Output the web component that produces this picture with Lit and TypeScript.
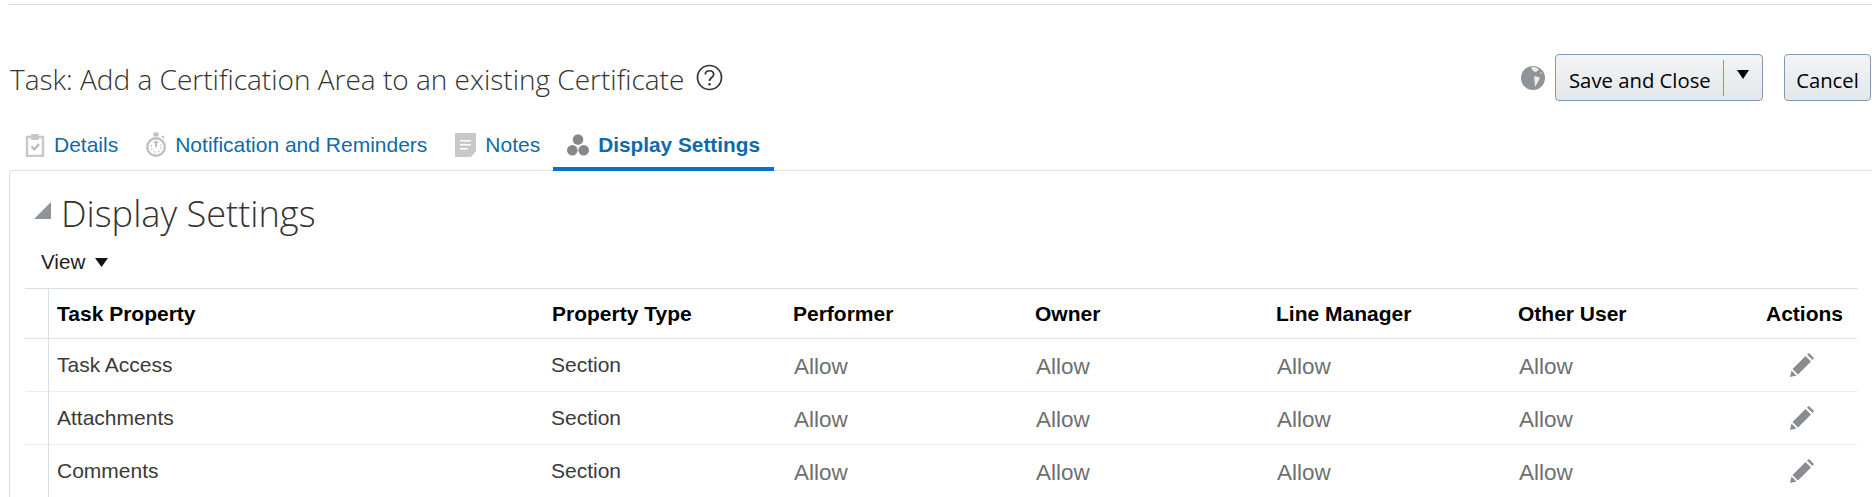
import { LitElement, html, css, svg } from "lit";
import { customElement } from "lit/decorators.js";

const pencil = svg`<svg class="pencil" viewBox="0 0 24 24" width="24" height="24"><path fill="#8a8d90" d="M17 1.500 L19 0 L24 5 L22.500 7 Z M15.500 3 L21 8.500 L8 21.500 L2.500 16 Z M1.500 17.500 L6.500 22.500 L0 24 Z"/></svg>`;

const rows = ["Task Access", "Attachments", "Comments"];

@customElement("app-root")
export class AppRoot extends LitElement {
  static styles = css`
    :host { display: block; width: 1872px; height: 497px; overflow: hidden; background: #fff; font-family: "Liberation Sans", Arial, sans-serif; }
    .topline { margin: 4px 0 0 9px; border-top: 1px solid #d6dfe6; }
    .header { display: flex; align-items: center; height: 47px; padding: 0 1px 0 10px; margin-top: 49px; box-sizing: border-box; }
    .title { font-family: "Open Sans", sans-serif; font-weight: 300; font-size: 28px; color: #333; white-space: nowrap; padding-top: 2px; }
    .help { margin-left: 12px; }
    .spacer { flex: 1; }
    .globe { margin-right: 10px; display: block; }
    .btn { display: flex; align-items: center; height: 47px; box-sizing: border-box; border: 1px solid #7f9ab0; border-radius: 4px; background: linear-gradient(#f2f4f5, #e4e8eb); font-family: "Open Sans", sans-serif; font-size: 20.3px; color: #000; }
    .label { padding-top: 5px; }
    .save { width: 208px; padding-left: 13px; margin-right: 21px; }
    .save .sep { width: 1px; height: 36px; background: #7f9ab0; margin-left: 12px; }
    .save .caret { margin-left: 13px; margin-bottom: 7px; }
    .cancel { width: 87px; justify-content: center; }
    .tabs { display: flex; height: 50px; padding-left: 11px; margin-top: 20px; box-sizing: border-box; position: relative; z-index: 1; }
    .tab { display: flex; align-items: center; gap: 9px; padding: 1px 14px 0; box-sizing: border-box; height: 50px; color: #0f6aa8; font-size: 21px; white-space: nowrap; border-bottom: 4px solid transparent; }
    .tab.notes { padding-right: 13px; }
    .tab.on { font-weight: bold; font-size: 20.800px; border-bottom-color: #0572ce; }
    .panel { margin: -1px 0 0 9px; border-top: 1px solid #d6dfe6; border-left: 1px solid #d6dfe6; border-top-left-radius: 4px; height: 330px; box-sizing: border-box; }
    .sec { display: flex; align-items: center; height: 72px; padding: 12px 0 0 24px; box-sizing: border-box; gap: 10px; }
    .sec h2 { margin: 0; font-family: "Open Sans", sans-serif; font-weight: 300; font-size: 36.200px; color: #333; white-space: nowrap; }
    .tri { margin-bottom: 6px; }
    .view { display: flex; align-items: center; gap: 10px; height: 45px; padding: 0 0 7px 31px; font-size: 20.6px; color: #222; box-sizing: border-box; }
    .table { margin: 0 14px 0 15px; border-top: 1px solid #d6dfe6; display: grid; grid-template-columns: 24px 493px 241px 242px 241px 242px 243px 106px; grid-template-rows: 50px repeat(3, 53px); }
    .c { display: flex; align-items: center; padding: 0 0 1px 9px; box-sizing: border-box; border-bottom: 1px solid #e8edf0; font-size: 21px; color: #3a3a3a; white-space: nowrap; }
    .c.first { padding-left: 8px; }
    .c.side { padding: 0; border-right: 1px solid #d6dfe6; }
    .c.h { font-weight: bold; color: #000; height: 50px; border-bottom-color: #d6dfe6; padding: 0 0 0 10px; }
    .c.h.first { padding-left: 8px; }
    .c.a { font-size: 22.5px; color: #6f6f6f; padding: 4px 0 0 11px; }
    .c.act { justify-content: center; padding: 0 4px 0 0; }
    .c.h.acth { justify-content: flex-end; padding: 0 14px 0 0; }
  `;

  render() {
    return html`
      <div class="topline"></div>
      <div class="header">
        <span class="title">Task: Add a Certification Area to an existing Certificate</span>
        <svg class="help" width="27" height="27" viewBox="0 0 27 27"><circle cx="13.5" cy="13.5" r="12" fill="none" stroke="#333" stroke-width="1.7"/><path d="M9.300 10.500 C9.300 5.500 17.700 5.500 17.700 10.500 C17.700 13.500 13.500 13.500 13.500 17" fill="none" stroke="#333" stroke-width="1.7"/><circle cx="13.5" cy="20.300" r="1.200" fill="#333"/></svg>
        <span class="spacer"></span>
        <svg class="globe" width="24" height="24" viewBox="0 0 24 24"><circle cx="12" cy="12" r="12" fill="#8f9498"/><path fill="#fff" opacity=".8" d="M10 1.500 C13 0.500 16 1.500 18 3.500 L15 6 L12 5 Z M13 10 L19 11.500 L17 16 L14 21 L13.500 15 Z M19 6 L21 7 L20 8 Z"/></svg>
        <div class="btn save"><span class="label">Save and Close</span><span class="sep"></span>
          <svg class="caret" width="12" height="9" viewBox="0 0 12 9"><path d="M0 0H12L6 9Z" fill="#000"/></svg></div>
        <div class="btn cancel"><span class="label">Cancel</span></div>
      </div>
      <div class="tabs">
        <div class="tab"><svg width="20" height="24" viewBox="0 0 20 24"><path fill="none" stroke="#c8c8c8" stroke-width="2.4" d="M6 4H2V23H18V4H14"/><rect x="6" y="1" width="8" height="6" rx="1" fill="#c8c8c8"/><path fill="none" stroke="#b5b5b5" stroke-width="2" d="M6.500 13.500L9.300 16.500L14 11"/></svg>Details</div>
        <div class="tab"><svg width="20" height="25" viewBox="0 0 20 25"><circle cx="10" cy="15" r="8.800" fill="none" stroke="#c0c0c0" stroke-width="2.400"/><rect x="7.500" y="0.500" width="5" height="4" fill="#c0c0c0"/><path stroke="#c0c0c0" stroke-width="2" d="M16 4L18 6"/><path stroke="#a8a8a8" stroke-width="1.600" d="M10 9V15"/><circle cx="10" cy="15" r="5" fill="none" stroke="#c8c8c8" stroke-dasharray="1.500 2.500" stroke-width="1.500"/></svg>Notification and Reminders</div>
        <div class="tab notes"><svg width="21" height="24" viewBox="0 0 21 24"><path fill="#c8c8c8" d="M0 0H21V18L16 24H0Z"/><path fill="#fff" d="M5 7H16V8.500H5Z M5 11H16V12.500H5Z M5 15H13V16.500H5Z M18 23 L21 20 V23Z"/></svg>Notes</div>
        <div class="tab on"><svg width="22" height="22" viewBox="0 0 22 22"><g fill="#84888c"><circle cx="11" cy="5.500" r="5.300"/><circle cx="5.300" cy="16.300" r="5.300"/><circle cx="16.700" cy="16.300" r="5.300"/></g></svg>Display Settings</div>
      </div>
      <div class="panel">
        <div class="sec">
          <svg class="tri" width="17" height="17" viewBox="0 0 17 17"><path d="M17 0V17H0Z" fill="#8f9498"/></svg>
          <h2>Display Settings</h2>
        </div>
        <div class="view">View <svg width="13" height="9" viewBox="0 0 13 9"><path d="M0 0H13L6.500 9Z" fill="#111"/></svg></div>
        <div class="table">
          <div class="c side h"></div>
          <div class="c h first">Task Property</div>
          <div class="c h">Property Type</div>
          <div class="c h">Performer</div>
          <div class="c h">Owner</div>
          <div class="c h">Line Manager</div>
          <div class="c h">Other User</div>
          <div class="c h acth">Actions</div>
          ${rows.map(
            (r) => html`
              <div class="c side"></div>
              <div class="c first">${r}</div>
              <div class="c">Section</div>
              <div class="c a">Allow</div>
              <div class="c a">Allow</div>
              <div class="c a">Allow</div>
              <div class="c a">Allow</div>
              <div class="c act">${pencil}</div>
            `
          )}
        </div>
      </div>
    `;
  }
}
